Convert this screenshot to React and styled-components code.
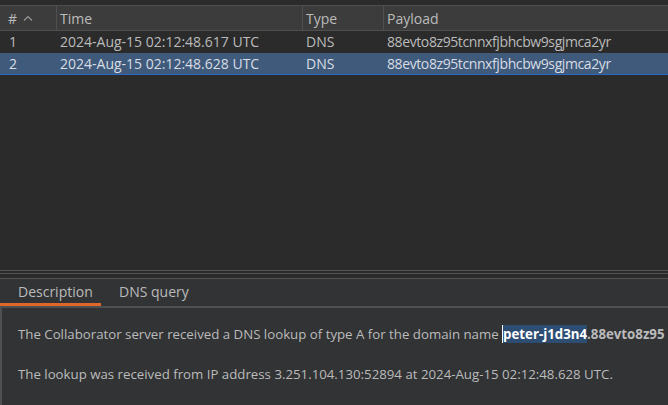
import React from "react";
import styled, { createGlobalStyle } from "styled-components";

const GlobalStyle = createGlobalStyle`
  html, body {
    margin: 0;
    padding: 0;
    background: #2b2b2b;
  }
  body {
    font-family: "Open Sans", "Noto Sans", sans-serif;
    font-size: 14px;
    color: #bbbbbb;
  }
`;

const Page = styled.div`
  width: 668px;
  height: 405px;
  display: flex;
  flex-direction: column;
  overflow: hidden;
`;

const TablePane = styled.div`
  height: 273px;
  padding-top: 5px;
  box-sizing: border-box;
  background: #2b2b2b;
`;

const Grid = styled.div`
  display: grid;
  grid-template-columns: 57px 246px 81px 1fr;
`;

const HeadCell = styled.div`
  height: 24px;
  display: flex;
  align-items: center;
  gap: 6px;
  padding-left: ${(p) => p.$pad || 3}px;
  background: #3c3c3c;
  border-top: 1px solid #4e4e4e;
  border-bottom: 1px solid #4e4e4e;
  border-right: ${(p) => (p.$last ? "none" : "1px solid #505050")};
  color: #bbbbbb;
  white-space: nowrap;
`;

const Cell = styled.div`
  height: 22px;
  display: flex;
  align-items: center;
  padding-left: ${(p) => p.$pad || 3}px;
  background: ${(p) => (p.$selected ? "#3f5a7b" : "#2b2b2b")};
  border-bottom: 1px solid ${(p) => (p.$selected ? "#2e66c4" : "#2b2b2b")};
  box-sizing: border-box;
  color: ${(p) => (p.$selected ? "#d8dde4" : "#bbbbbb")};
  letter-spacing: ${(p) => p.$tight || 0}px;
  white-space: nowrap;
  overflow: hidden;
`;

const Splitter = styled.div`
  height: 7px;
  border-top: 1px solid #555555;
  border-bottom: 1px solid #555555;
  background: #2b2b2b;
  position: relative;
  &::after {
    content: "";
    position: absolute;
    left: 0;
    right: 0;
    top: 2px;
    height: 1px;
    background: #555555;
  }
`;

const DetailPane = styled.div`
  flex: 1;
  background: #323335;
  display: flex;
  flex-direction: column;
`;

const TabBar = styled.div`
  display: flex;
  height: 27px;
  border-bottom: 2px solid #4f5052;
`;

const Tab = styled.div`
  width: ${(p) => p.$w}px;
  display: flex;
  align-items: center;
  padding-left: 18px;
  box-sizing: border-box;
  color: #bbbbbb;
  border-bottom: 3px solid ${(p) => (p.$active ? "#e0672b" : "transparent")};
`;

const Content = styled.div`
  flex: 1;
  border-left: 2px solid #4f5052;
  padding: 17px 0 0 16px;
  font-size: 13.25px;
  white-space: nowrap;
  overflow: hidden;
`;

const Para = styled.p`
  margin: 0 0 21px;
  line-height: 19px;
  color: #bbbbbb;
`;

const Highlight = styled.span`
  font-weight: 700;
  color: #ffffff;
  background: #2e4d73;
  border-left: 1px solid #ffffff;
`;

const Bold = styled.span`
  font-weight: 700;
  color: #bbbbbb;
`;

const SortUp = () => (
  <svg width="10" height="6" viewBox="0 0 10 6" fill="none">
    <polyline points="1,5.5 5,1.5 9,5.5" stroke="#9a9a9a" strokeWidth="1.1" />
  </svg>
);

const rows = [
  { id: 1, time: "2024-Aug-15 02:12:48.617 UTC", type: "DNS", payload: "88evto8z95tcnnxfjbhcbw9sgjmca2yr" },
  { id: 2, time: "2024-Aug-15 02:12:48.628 UTC", type: "DNS", payload: "88evto8z95tcnnxfjbhcbw9sgjmca2yr", selected: true },
];

export default function App() {
  return (
    <Page>
      <GlobalStyle />
      <TablePane>
        <Grid>
          <HeadCell $pad={8}>
            # <SortUp />
          </HeadCell>
          <HeadCell>Time</HeadCell>
          <HeadCell>Type</HeadCell>
          <HeadCell $last>Payload</HeadCell>
          {rows.map((r) => (
            <React.Fragment key={r.id}>
              <Cell $selected={r.selected} $pad={9}>{r.id}</Cell>
              <Cell $selected={r.selected}>{r.time}</Cell>
              <Cell $selected={r.selected}>{r.type}</Cell>
              <Cell $selected={r.selected} $tight={-0.4}>{r.payload}</Cell>
            </React.Fragment>
          ))}
        </Grid>
      </TablePane>
      <Splitter />
      <DetailPane>
        <TabBar>
          <Tab $w={101} $active>Description</Tab>
          <Tab $w={100}>DNS query</Tab>
        </TabBar>
        <Content>
          <Para>
            The Collaborator server received a DNS lookup of type A for the domain name{" "}
            <Highlight>peter-j1d3n4</Highlight>
            <Bold>.88evto8z95</Bold>
          </Para>
          <Para>
            The lookup was received from IP address 3.251.104.130:52894 at 2024-Aug-15 02:12:48.628 UTC.
          </Para>
        </Content>
      </DetailPane>
    </Page>
  );
}
